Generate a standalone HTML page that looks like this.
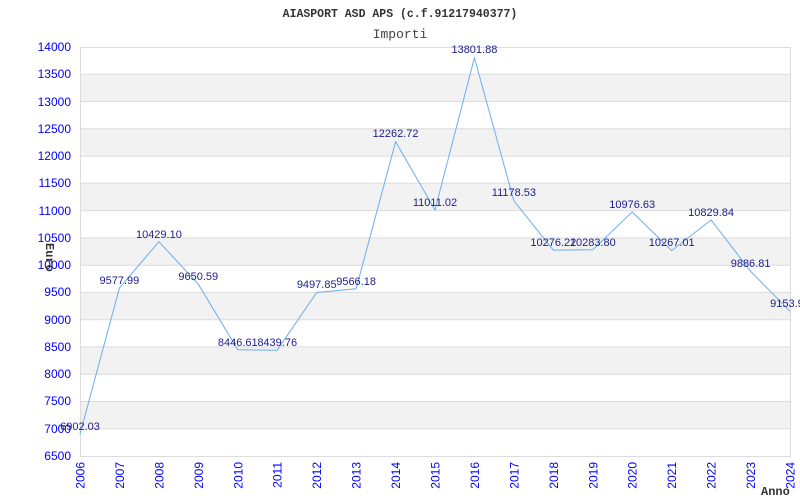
<!DOCTYPE html>
<html><head><meta charset="utf-8"><style>
html,body{margin:0;padding:0;background:#fff;width:800px;height:500px;overflow:hidden}
</style></head><body>
<svg width="800" height="500" xmlns="http://www.w3.org/2000/svg" font-family="Liberation Sans, sans-serif">
<rect width="800" height="500" fill="#fff"/>
<g fill="#f2f2f2">
<rect x="80" y="74.3" width="710" height="27.3"/>
<rect x="80" y="128.8" width="710" height="27.3"/>
<rect x="80" y="183.3" width="710" height="27.3"/>
<rect x="80" y="237.9" width="710" height="27.3"/>
<rect x="80" y="292.4" width="710" height="27.3"/>
<rect x="80" y="346.9" width="710" height="27.3"/>
<rect x="80" y="401.5" width="710" height="27.3"/>
</g>
<g stroke="#dcdcdc" stroke-width="1">
<line x1="80" x2="790" y1="74.3" y2="74.3"/><line x1="80" x2="790" y1="101.5" y2="101.5"/>
<line x1="80" x2="790" y1="128.8" y2="128.8"/><line x1="80" x2="790" y1="156.1" y2="156.1"/>
<line x1="80" x2="790" y1="183.3" y2="183.3"/><line x1="80" x2="790" y1="210.6" y2="210.6"/>
<line x1="80" x2="790" y1="237.9" y2="237.9"/><line x1="80" x2="790" y1="265.2" y2="265.2"/>
<line x1="80" x2="790" y1="292.4" y2="292.4"/><line x1="80" x2="790" y1="319.7" y2="319.7"/>
<line x1="80" x2="790" y1="346.9" y2="346.9"/><line x1="80" x2="790" y1="374.2" y2="374.2"/>
<line x1="80" x2="790" y1="401.5" y2="401.5"/><line x1="80" x2="790" y1="428.7" y2="428.7"/>
<rect x="80.5" y="47.5" width="710" height="409" fill="none"/>
</g>
<g font-size="12" fill="#0000ff" text-anchor="end">
<text x="71" y="51">14000</text><text x="71" y="78">13500</text><text x="71" y="106">13000</text>
<text x="71" y="133">12500</text><text x="71" y="160">12000</text><text x="71" y="187">11500</text>
<text x="71" y="215">11000</text><text x="71" y="242">10500</text><text x="71" y="269">10000</text>
<text x="71" y="296">9500</text><text x="71" y="324">9000</text><text x="71" y="351">8500</text>
<text x="71" y="378">8000</text><text x="71" y="405">7500</text><text x="71" y="433">7000</text>
<text x="71" y="460">6500</text>
</g>
<g font-size="12" fill="#0000ff" text-anchor="end">
<text transform="translate(84.5,462) rotate(-90)">2006</text>
<text transform="translate(123.9,462) rotate(-90)">2007</text>
<text transform="translate(163.4,462) rotate(-90)">2008</text>
<text transform="translate(202.8,462) rotate(-90)">2009</text>
<text transform="translate(242.3,462) rotate(-90)">2010</text>
<text transform="translate(281.7,462) rotate(-90)">2011</text>
<text transform="translate(321.2,462) rotate(-90)">2012</text>
<text transform="translate(360.6,462) rotate(-90)">2013</text>
<text transform="translate(400.1,462) rotate(-90)">2014</text>
<text transform="translate(439.5,462) rotate(-90)">2015</text>
<text transform="translate(478.9,462) rotate(-90)">2016</text>
<text transform="translate(518.4,462) rotate(-90)">2017</text>
<text transform="translate(557.8,462) rotate(-90)">2018</text>
<text transform="translate(597.3,462) rotate(-90)">2019</text>
<text transform="translate(636.7,462) rotate(-90)">2020</text>
<text transform="translate(676.2,462) rotate(-90)">2021</text>
<text transform="translate(715.6,462) rotate(-90)">2022</text>
<text transform="translate(755.1,462) rotate(-90)">2023</text>
<text transform="translate(794.5,462) rotate(-90)">2024</text>
</g>
<polyline fill="none" stroke="#6aaef0" stroke-width="1" points="80,434.1 119.4,288.1 158.9,241.7 198.3,284.2 237.8,349.8 277.2,350.2 316.7,292.5 356.1,288.8 395.6,141.7 435,210 474.4,57.8 513.9,200.9 553.3,250.1 592.8,249.7 632.2,211.9 671.7,250.6 711.1,219.9 750.6,271.3 790,311.3"/>
<g font-size="11" fill="#1c1c8c" text-anchor="middle">
<text x="80" y="430">6902.03</text>
<text x="119.4" y="284">9577.99</text>
<text x="158.9" y="238">10429.10</text>
<text x="198.3" y="280">9650.59</text>
<text x="237.8" y="346">8446.61</text>
<text x="277.2" y="346">8439.76</text>
<text x="316.7" y="288">9497.85</text>
<text x="356.1" y="285">9566.18</text>
<text x="395.6" y="137">12262.72</text>
<text x="435" y="206">11011.02</text>
<text x="474.4" y="53">13801.88</text>
<text x="513.9" y="196">11178.53</text>
<text x="553.3" y="246">10276.22</text>
<text x="592.8" y="246">10283.80</text>
<text x="632.2" y="208">10976.63</text>
<text x="671.7" y="246">10267.01</text>
<text x="711.1" y="216">10829.84</text>
<text x="750.6" y="267">9886.81</text>
<text x="790" y="307">9153.91</text>
</g>
<text x="400" y="17" font-family="Liberation Mono, monospace" font-weight="bold" font-size="11.5" fill="#333" text-anchor="middle">AIASPORT ASD APS (c.f.91217940377)</text>
<text x="400" y="38" font-family="Liberation Mono, monospace" font-size="13" fill="#444" text-anchor="middle">Importi</text>
<text transform="translate(46,243) rotate(90)" font-family="Liberation Mono, monospace" font-weight="bold" font-size="12" fill="#333">Euro</text>
<text x="761" y="495" font-family="Liberation Mono, monospace" font-weight="bold" font-size="12" fill="#333">Anno</text>
</svg>
</body></html>
